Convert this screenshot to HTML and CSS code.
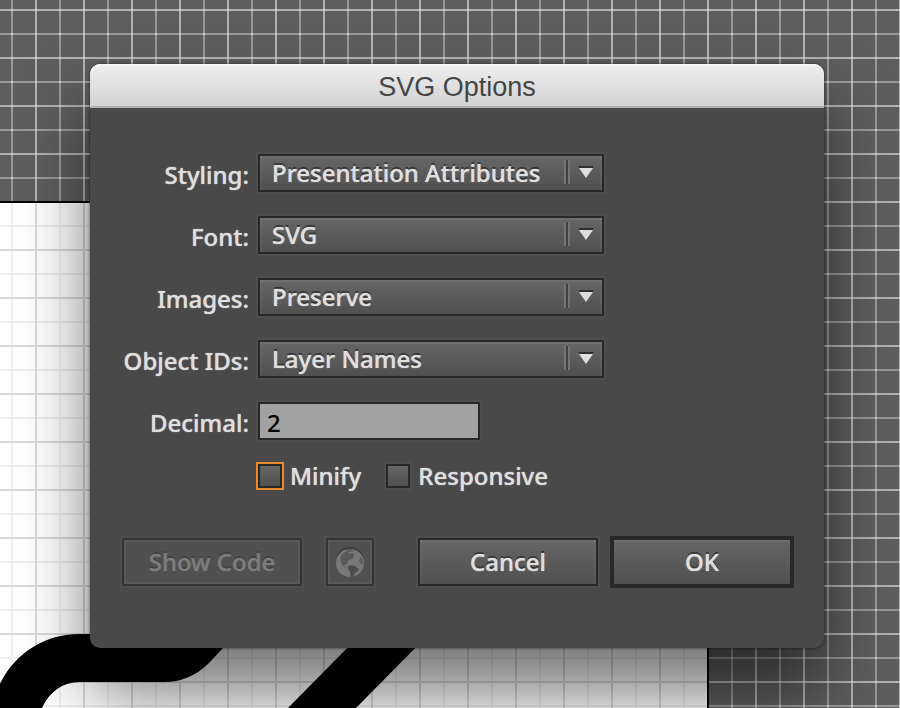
FILE: index.html
```html
<!DOCTYPE html>
<html lang="en">
<head>
<meta charset="utf-8">
<title>SVG Options</title>
<link rel="stylesheet" href="styles.css">
</head>
<body>
<svg class="canvas" aria-hidden="true">
  <defs>
    <pattern id="dark" x="11" y="9" width="48" height="48" patternUnits="userSpaceOnUse">
      <rect width="48" height="48" fill="#5e5e5e"/>
      <path d="M0 0h2v48H0zM0 24h48v2H0z" fill="#999"/>
      <path d="M24 0h2v48h-2zM0 0h48v2H0z" fill="#b2b2b2"/>
      <path d="M0 0h2v2H0zM24 0h2v2h-2zM0 24h2v2H0zM24 24h2v2h-2z" fill="#cfcfcf"/>
    </pattern>
    <pattern id="light" x="11" y="9" width="48" height="48" patternUnits="userSpaceOnUse">
      <rect width="48" height="48" fill="#fff"/>
      <path d="M0 0h2v48H0zM0 24h48v2H0z" fill="#f0f0f0"/>
      <path d="M24 0h2v48h-2zM0 0h48v2H0z" fill="#dadada"/>
    </pattern>
  </defs>
  <rect width="100%" height="100%" fill="url(#dark)"/>
  <rect y="201" width="709" height="100%" fill="#000"/>
  <rect y="203" width="707" height="100%" fill="url(#light)"/>
  <path d="M-2 688C14 652 46 634 80 634H238L223 648L208 664C195 676 181 682 164 682H80C62 682 49 692 41 710H-10Z"/>
  <path d="M362 633H430L354 710H286Z"/>
</svg>
<main class="dialog">
  <h1 class="title">SVG Options</h1>
  <form class="body">
    <div class="fields">
      <label for="styling">Styling:</label>
      <div class="picker"><select id="styling"><option>Presentation Attributes</option></select><svg class="arrow" viewBox="0 0 38 24" aria-hidden="true"><path d="M0 0h2v24H0zM4 0h2v24H4z" fill="#737373"/><path d="M2 0h2v24H2z" fill="#414141"/><path d="M15 6h14v2H15z" fill="#303030"/><path d="M15 8h14l-7 10z" fill="#dedede"/></svg></div>
      <label for="font">Font:</label>
      <div class="picker"><select id="font"><option>SVG</option></select><svg class="arrow" viewBox="0 0 38 24" aria-hidden="true"><path d="M0 0h2v24H0zM4 0h2v24H4z" fill="#737373"/><path d="M2 0h2v24H2z" fill="#414141"/><path d="M15 6h14v2H15z" fill="#303030"/><path d="M15 8h14l-7 10z" fill="#dedede"/></svg></div>
      <label for="images">Images:</label>
      <div class="picker"><select id="images"><option>Preserve</option></select><svg class="arrow" viewBox="0 0 38 24" aria-hidden="true"><path d="M0 0h2v24H0zM4 0h2v24H4z" fill="#737373"/><path d="M2 0h2v24H2z" fill="#414141"/><path d="M15 6h14v2H15z" fill="#303030"/><path d="M15 8h14l-7 10z" fill="#dedede"/></svg></div>
      <label for="ids">Object IDs:</label>
      <div class="picker"><select id="ids"><option>Layer Names</option></select><svg class="arrow" viewBox="0 0 38 24" aria-hidden="true"><path d="M0 0h2v24H0zM4 0h2v24H4z" fill="#737373"/><path d="M2 0h2v24H2z" fill="#414141"/><path d="M15 6h14v2H15z" fill="#303030"/><path d="M15 8h14l-7 10z" fill="#dedede"/></svg></div>
      <label for="decimal">Decimal:</label>
      <input class="number" id="decimal" type="text" value="2">
    </div>
    <div class="checks">
      <label class="check"><input class="focused" type="checkbox">Minify</label>
      <label class="check"><input type="checkbox">Responsive</label>
    </div>
    <div class="actions">
      <button class="btn" type="button" disabled>Show Code</button>
      <button class="btn globe" type="button" aria-label="Preview in browser" disabled>
        <svg viewBox="0 0 28 30" aria-hidden="true"><circle cx="14" cy="14" r="14" fill="#3e3e3e"/><circle cx="14" cy="16" r="14" fill="#787878"/><path d="M6 7l5-3 2 1-1 2 4-1 2 2-1 3-4 2-2 3 0 2-2-1-1 2 3 2 1 1-2-1-4-3-1-4-1-3z" fill="#585858"/><path d="M12 19l3-1 4 1 4 3-1 2-3 2-2 4-2 0-1-5-2-3z" fill="#4c4c4c"/><path d="M24 10l2 1 1 5-1 2-2-2-1-2zM10 3l4-1 4 1-1 1-4 1z" fill="#5c5c5c"/></svg>
      </button>
      <button class="btn cancel" type="button">Cancel</button>
      <button class="btn primary" type="submit">OK</button>
    </div>
  </form>
</main>
</body>
</html>
```
FILE: styles.css
```css
* { box-sizing: border-box; }

body {
  margin: 0;
  min-height: 100vh;
  padding: 64px 76px 60px 90px;
  position: relative;
  overflow: hidden;
  background: #5e5e5e;
  font-family: "Noto Sans", "Open Sans", sans-serif;
  font-size: 24px;
  font-weight: 500;
  line-height: 32px;
  color: #dedede;
}

.canvas {
  position: absolute;
  inset: 0;
  width: 100%;
  height: 100%;
}

.dialog {
  position: relative;
  border-radius: 10px;
  background: #494949;
  box-shadow: 0 0 3px rgba(0, 0, 0, .6), 0 44px 70px rgba(0, 0, 0, .55);
}

.title {
  margin: 0;
  padding: 7px 0 3px;
  border-bottom: 2px solid #b0b0b0;
  border-radius: 10px 10px 0 0;
  background: linear-gradient(#efefef, #d2d2d2);
  box-shadow: inset 0 2px #f5f5f5;
  color: #454545;
  font: 27px/32px "Liberation Sans", sans-serif;
  text-align: center;
}

.body { padding: 46px 30px 60px 32px; }

.fields {
  display: grid;
  grid-template-columns: 127px minmax(0, 346px);
  column-gap: 9px;
  row-gap: 24px;
}

.fields label {
  padding-top: 5px;
  text-align: right;
  white-space: nowrap;
}

label { text-shadow: 0 0 1px #dedede; }

.picker { position: relative; height: 38px; }

select, .number, .btn, .check input {
  margin: 0;
  border: 2px solid #282828;
  border-radius: 0;
  background: linear-gradient(#666, #505050);
  color: inherit;
  font: inherit;
  appearance: none;
  outline: 0;
}

select, .btn {
  box-shadow: inset 0 2px rgba(255, 255, 255, .06), inset 2px 0 rgba(255, 255, 255, .04), inset -2px 0 rgba(255, 255, 255, .04), 0 0 0 2px #4e4e4e;
  text-shadow: 0 0 1px #dedede, 0 -2px #333;
}

select {
  width: 100%;
  height: 38px;
  padding: 0 40px 0 12px;
}

.arrow {
  position: absolute;
  top: 6px;
  right: 2px;
  width: 38px;
  height: 24px;
  pointer-events: none;
}

.number {
  width: 222px;
  height: 38px;
  padding: 2px 7px 0;
  background: #a2a2a2;
  box-shadow: 0 0 0 2px #4e4e4e;
  color: #000;
}

.checks {
  display: flex;
  gap: 25px;
  margin: 20px 0 0 136px;
}

.check {
  display: flex;
  align-items: center;
  gap: 8px;
}

.check input {
  width: 24px;
  height: 24px;
  box-shadow: 0 0 0 2px #4e4e4e;
}

.check .focused { box-shadow: 0 0 0 2px #e88b2d; }

.actions {
  display: flex;
  align-items: center;
  margin-top: 44px;
}

.btn {
  width: 180px;
  height: 48px;
  padding: 0;
}

.btn:disabled {
  border-color: #333;
  background: #505050;
  box-shadow: inset 0 0 0 2px #595959, 0 0 0 2px #4e4e4e;
  color: #7c7c7c;
  text-shadow: 0 0 1px #7c7c7c, 0 -2px #404040;
}

.globe {
  display: grid;
  place-items: center;
  width: 48px;
  margin-left: 24px;
}

.globe svg { width: 28px; height: 30px; }

.cancel { margin: 0 12px 0 auto; }

.primary {
  width: 184px;
  height: 52px;
  border-width: 4px;
  box-shadow: inset 0 2px rgba(255, 255, 255, .06);
}
```
